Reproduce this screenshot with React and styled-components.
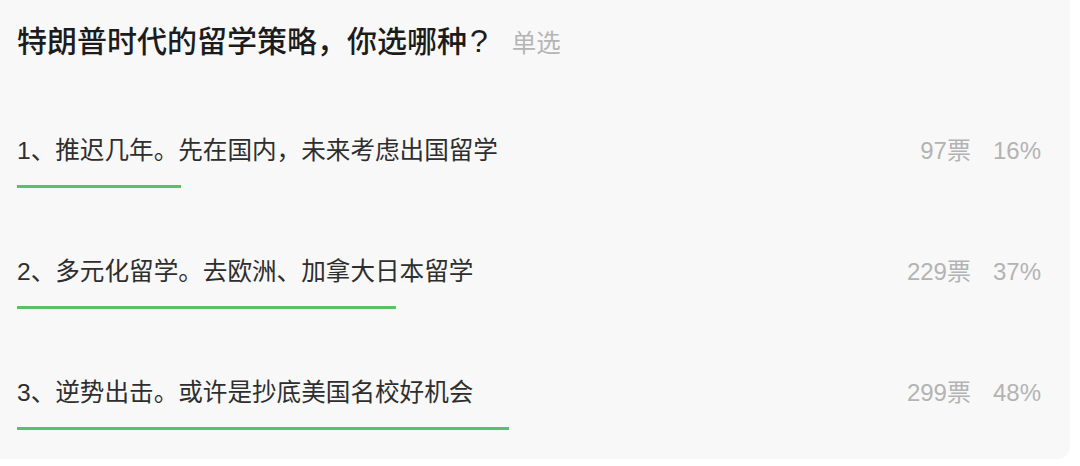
import React from 'react'
import styled, { createGlobalStyle } from 'styled-components'

const GlobalStyle = createGlobalStyle`
  html, body {
    margin: 0;
    padding: 0;
    background: #ffffff;
  }
  body {
    font-family: "Liberation Sans", "Noto Sans CJK SC", sans-serif;
  }
`

const Card = styled.section`
  width: 1070px;
  height: 459px;
  box-sizing: border-box;
  background: #f8f8f8;
  border-radius: 0 0 12px 0;
  padding: 21px 29px 0 17px;
`

const Header = styled.div`
  display: flex;
  align-items: baseline;
  gap: 24px;
  height: 40px;
  line-height: 40px;
`

const Title = styled.h1`
  margin: 0;
  font-size: 30px;
  font-weight: 500;
  color: #1c1c1c;
`

const Mark = styled.span`
  margin-left: 3px;
  font-size: 32px;
  font-weight: 400;
`

const Tag = styled.span`
  font-size: 24.5px;
  color: #b5b5b5;
`

const Options = styled.ul`
  list-style: none;
  margin: 69px 0 0;
  padding: 0;
  display: flex;
  flex-direction: column;
  gap: 63px;
`

const Option = styled.li`
  display: flex;
  flex-direction: column;
  gap: 19px;
`

const Row = styled.div`
  display: flex;
  align-items: center;
  justify-content: space-between;
  height: 36px;
`

const Label = styled.span`
  font-size: 24.6px;
  color: #2e2e2e;
`

const Stats = styled.div`
  display: flex;
  align-items: baseline;
  gap: 22px;
  font-size: 24px;
  color: #b3b3b3;
`

const Track = styled.div`
  height: 3px;
`

const Fill = styled.div`
  height: 100%;
  background: #57c26a;
`

const options = [
  { label: '1、推迟几年。先在国内，未来考虑出国留学', votes: 97, pct: 16 },
  { label: '2、多元化留学。去欧洲、加拿大日本留学', votes: 229, pct: 37 },
  { label: '3、逆势出击。或许是抄底美国名校好机会', votes: 299, pct: 48 },
]

export default function App() {
  return (
    <>
      <GlobalStyle />
      <Card>
        <Header>
          <Title>
            特朗普时代的留学策略，你选哪种<Mark>?</Mark>
          </Title>
          <Tag>单选</Tag>
        </Header>
        <Options>
          {options.map((o) => (
            <Option key={o.label}>
              <Row>
                <Label>{o.label}</Label>
                <Stats>
                  <span>{o.votes}票</span>
                  <span>{o.pct}%</span>
                </Stats>
              </Row>
              <Track>
                <Fill style={{ width: `${o.pct}%` }} />
              </Track>
            </Option>
          ))}
        </Options>
      </Card>
    </>
  )
}
